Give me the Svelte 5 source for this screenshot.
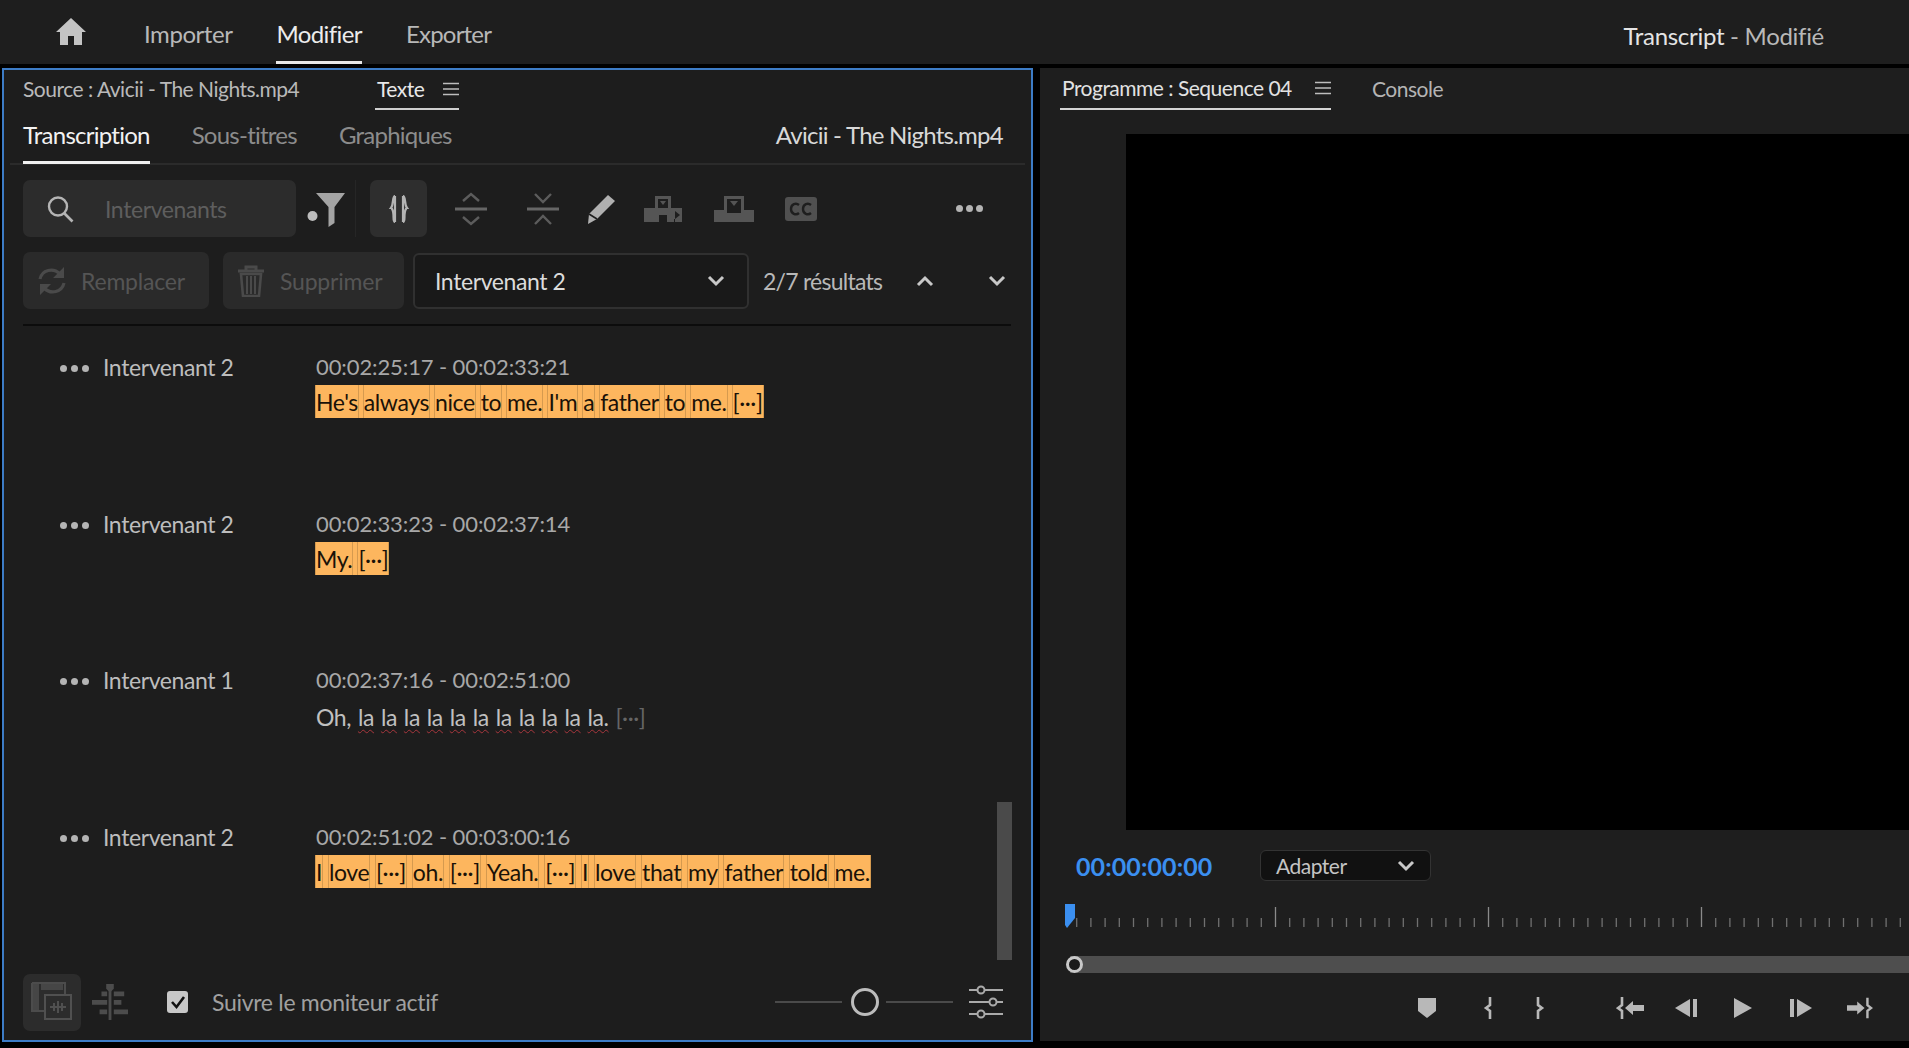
<script>
  const ticks = Array.from({ length: 62 }, (_, i) => ({ x: -1.5 + i * 14.2, major: i % 15 === 0 }));
  const gapW = '[···]';
  const rows = [
    { name: 'Intervenant 2', time: '00:02:25:17 - 00:02:33:21', hl: true, sp: 6, words: ["He's", 'always', 'nice', 'to', 'me.', "I'm", 'a', 'father', 'to', 'me.', gapW] },
    { name: 'Intervenant 2', time: '00:02:33:23 - 00:02:37:14', hl: true, sp: 6, words: ['My.', gapW] },
    { name: 'Intervenant 1', time: '00:02:37:16 - 00:02:51:00', hl: false, sp: 6.9, words: ['Oh,', 'la', 'la', 'la', 'la', 'la', 'la', 'la', 'la', 'la', 'la', 'la.', gapW] },
    { name: 'Intervenant 2', time: '00:02:51:02 - 00:03:00:16', hl: true, sp: 6.85, words: ['I', 'love', gapW, 'oh.', gapW, 'Yeah.', gapW, 'I', 'love', 'that', 'my', 'father', 'told', 'me.'] }
  ];
</script>

{#snippet burger()}
  <svg class="burger" width="16" height="14" viewBox="0 0 16 14"><path d="M0 1.500h16M0 7h16M0 12.500h16" stroke="#bdbdbd" stroke-width="1.600" /></svg>
{/snippet}
{#snippet chev(up = false, w = 18)}
  <svg width={w} height="12" viewBox="0 0 18 12"><path d={up ? 'M2 10l7-7 7 7' : 'M2 2l7 7 7-7'} fill="none" stroke="#c8c8c8" stroke-width="3" /></svg>
{/snippet}

<div class="app">
  <header class="top">
    <svg class="home" width="32" height="28" viewBox="0 0 32 28"><path d="M16 1L1 15h4v13h8v-9h6v9h8V15h4z" fill="#c4c4c4" /></svg>
    <nav class="nav">
      <span>Importer</span>
      <span class="on">Modifier</span>
      <span class="exp">Exporter</span>
    </nav>
    <div class="doc"><b>Transcript</b> - Modifié</div>
  </header>

  <main class="panels">
    <section class="left">
      <div class="tabs">
        <span class="src">Source : Avicii - The Nights.mp4</span>
        <span class="tab on"><span>Texte</span>{@render burger()}</span>
      </div>
      <div class="sub">
        <span class="sub-on">Transcription</span>
        <span>Sous-titres</span>
        <span>Graphiques</span>
        <span class="file">Avicii - The Nights.mp4</span>
      </div>

      <div class="tools">
        <div class="search">
          <svg width="28" height="30" viewBox="0 0 28 30"><circle cx="12" cy="12.500" r="9" fill="none" stroke="#b4b4b4" stroke-width="2.400" /><path d="M18.500 19.500l8 8" stroke="#b4b4b4" stroke-width="2.600" /></svg>
          <span class="ph">Intervenants</span>
        </div>
        <svg class="filter" width="38" height="36" viewBox="0 0 38 36"><circle cx="5.500" cy="25" r="5" fill="#bcbcbc" /><path d="M9 2h29L27.500 16v16l-6 4V16z" fill="#a4a4a4" /></svg>
        <i class="sep"></i>
        <div class="tbtn">
          <svg width="22" height="30" viewBox="0 0 22 30"><path d="M7 2c-3 0-1 8-4 12 1 0 1 1 1 1 3 4 0 13 3 13M15 2c3 0 1 8 4 12-1 0-1 1-1 1-3 4 0 13-3 13M7 2v26M15 2v26" fill="none" stroke="#b4b4b4" stroke-width="2.200" /></svg>
        </div>
        <svg class="ic i1" width="32" height="34" viewBox="0 0 32 34"><path d="M8 9l8-7 8 7M8 25l8 7 8-7" fill="none" stroke="#5c5c5c" stroke-width="2.400" /><path d="M0 17h32" stroke="#666" stroke-width="3" /></svg>
        <svg class="ic i2" width="32" height="34" viewBox="0 0 32 34"><path d="M8 2l8 8 8-8M8 32l8-8 8 8" fill="none" stroke="#5c5c5c" stroke-width="2.400" /><path d="M0 17h32" stroke="#666" stroke-width="3" /></svg>
        <svg class="ic i3" width="30" height="32" viewBox="0 0 30 32"><path d="M22 2l7 6L11 26l-9 5 1-10z" fill="#b0b0b0" /><path d="M3 21l8 5" stroke="#1e1e1e" stroke-width="1.600" /></svg>
        <svg class="ic i4" width="40" height="28" viewBox="0 0 40 28"><path d="M12 1h16v12h11v14h-7v-3h-1v3H24v-7h-8v7H1V13h11z" fill="#555" /><path d="M15 4h10v9H15z" fill="#1e1e1e" /><path d="M17 6h6l-3 4z" fill="#555" /><path d="M32 16l5 4-5 4z" fill="#1e1e1e" /></svg>
        <svg class="ic i5" width="40" height="26" viewBox="0 0 40 26"><path d="M10 0h20v14h10v12H0V14h10z" fill="#555" /><path d="M13 3h14v12H13z" fill="#1e1e1e" /><path d="M16 5h8l-4 5z" fill="#555" /><path d="M13 15h14v2H13z" fill="#1e1e1e" /></svg>
        <svg class="ic i6" width="32" height="24" viewBox="0 0 32 24"><rect width="32" height="24" rx="3" fill="#505050" /><path d="M14 8C11 5.500 6 7 6 12s5 6.500 8 4M26 8C23 5.500 18 7 18 12s5 6.500 8 4" fill="none" stroke="#1e1e1e" stroke-width="2.400" /></svg>
        <div class="more"><i></i><i></i><i></i></div>
      </div>

      <div class="search-row">
        <div class="btn b1">
          <svg width="30" height="32" viewBox="0 0 30 32"><path d="M3 14C5 5 16 2 23 9M27 18c-2 9-13 12-20 5" fill="none" stroke="#4a4a4a" stroke-width="3.200" /><path d="M27 2v11H16zM3 30V19h11z" fill="#4a4a4a" /></svg>
          <span>Remplacer</span>
        </div>
        <div class="btn b2">
          <svg width="28" height="32" viewBox="0 0 28 32"><path d="M1 6h26M9 5V2h10v3" fill="none" stroke="#4a4a4a" stroke-width="3" /><path d="M4 9h20l-2 22H6z" fill="none" stroke="#4a4a4a" stroke-width="2.600" /><path d="M10 11v18M14 11v18M18 11v18" stroke="#4a4a4a" stroke-width="2" /></svg>
          <span>Supprimer</span>
        </div>
        <div class="select">
          <span>Intervenant 2</span>
          {@render chev()}
        </div>
        <span class="count">2/7 résultats</span>
        <span class="up">{@render chev(true)}</span>
        <span class="down">{@render chev()}</span>
      </div>

      <div class="rule"></div>

      <div class="list">
        {#each rows as r}
          <article class="row">
            <div class="dots"><i></i><i></i><i></i></div>
            <div class="name">{r.name}</div>
            <div class="body">
              <div class="time">{r.time}</div>
              <div class="txt" class:hl={r.hl}>
                {#each r.words as w, i}
                  <span class="w" class:la={!r.hl && i > 0 && i < 12} class:gap={w === gapW && !r.hl}>{w}</span>{#if i < r.words.length - 1}<span class="s" style:width="{r.sp}px"></span>{/if}
                {/each}
              </div>
            </div>
          </article>
        {/each}
        <div class="scroll"></div>
      </div>

      <footer class="foot">
        <div class="fbtn">
          <svg width="42" height="40" viewBox="0 0 42 40"><path d="M1 1h33v11M1 1v28h12" fill="none" stroke="#4c4c4c" stroke-width="2" /><path d="M2 2h6v26H2z" fill="#464646" /><path d="M10 2h22v6H10z" fill="#464646" /><rect x="14" y="13" width="26" height="24" fill="#2c2c2c" stroke="#505050" stroke-width="2" /><path d="M19 25h16M23 21v8M27 19v12M31 21v8" stroke="#505050" stroke-width="2" /></svg>
        </div>
        <svg class="align" width="36" height="38" viewBox="0 0 38 38"><path d="M19 5v33" stroke="#4c4c4c" stroke-width="3" /><path d="M15 0h8v5l-4 4-4-4z" fill="#4c4c4c" /><path d="M10 8h6v5h-6zM23 8h11v5H23zM0 17h16v5H0zM23 17h8v5h-8zM8 27h8v5H8zM23 27h15v5H23z" fill="#4c4c4c" /></svg>
        <div class="check"><svg width="20" height="20" viewBox="0 0 20 20"><path d="M4 10l4.500 5L16 5" fill="none" stroke="#111" stroke-width="2.600" /></svg></div>
        <span class="follow">Suivre le moniteur actif</span>
        <div class="slider"><i></i><b></b><i></i></div>
        <svg class="tune" width="34" height="34" viewBox="0 0 34 34"><path d="M0 5h8M16 5h18M0 17h20M28 17h6M0 29h8M16 29h18" stroke="#aaa" stroke-width="2" /><circle cx="12" cy="5" r="3.500" fill="none" stroke="#aaa" stroke-width="2" /><circle cx="24" cy="17" r="3.500" fill="none" stroke="#aaa" stroke-width="2" /><circle cx="12" cy="29" r="3.500" fill="none" stroke="#aaa" stroke-width="2" /></svg>
      </footer>
    </section>

    <section class="right">
      <div class="rtabs">
        <span class="prog"><span>Programme : Sequence 04</span>{@render burger()}</span>
        <span class="console">Console</span>
      </div>
      <div class="video"></div>
      <div class="ctl">
        <span class="tc">00:00:00:00</span>
        <div class="fit"><span>Adapter</span>{@render chev(false, 18)}</div>
      </div>
      <div class="ruler">
        <svg width="845" height="24" viewBox="0 0 845 24">
          {#each ticks as t}
            <path d="M{t.x} {t.major ? 3 : 14}V23" stroke={t.major ? '#8a8a8a' : '#707070'} stroke-width="1.300" />
          {/each}
        </svg>
        <svg class="head" width="12" height="24" viewBox="0 0 12 24"><path d="M1 0h10v14l-8 10-2-3z" fill="#3b8ff0" /></svg>
      </div>
      <div class="bar"><i></i></div>
      <div class="trans">
        <svg class="m1" width="18" height="20" viewBox="0 0 18 20"><path d="M0 0h18v13l-9 7-9-7z" fill="#b8b8b8" /></svg>
        <svg class="m2" width="10" height="24" viewBox="0 0 10 24"><path d="M7 1v8l-4 3 4 3v8" fill="none" stroke="#b8b8b8" stroke-width="2.600" /></svg>
        <svg class="m3" width="10" height="24" viewBox="0 0 10 24"><path d="M3 1v8l4 3-4 3v8" fill="none" stroke="#b8b8b8" stroke-width="2.600" /></svg>
        <svg class="m4" width="28" height="24" viewBox="0 0 28 24"><path d="M6 1v8l-4 3 4 3v8" fill="none" stroke="#b8b8b8" stroke-width="2.600" /><path d="M9 12l8-7v4h11v6H17v4z" fill="#b8b8b8" /></svg>
        <svg class="m5" width="22" height="20" viewBox="0 0 22 20"><path d="M15 1v18L0 10z" fill="#b8b8b8" /><path d="M18 1h4v18h-4z" fill="#b8b8b8" /></svg>
        <svg class="m6" width="18" height="22" viewBox="0 0 18 22"><path d="M0 1l18 10L0 21z" fill="#b8b8b8" /></svg>
        <svg class="m7" width="22" height="20" viewBox="0 0 22 20"><path d="M0 1h4v18H0z" fill="#b8b8b8" /><path d="M7 1v18l15-9z" fill="#b8b8b8" /></svg>
        <svg class="m8" width="26" height="24" viewBox="0 0 28 24"><path d="M22 1v8l4 3-4 3v8" fill="none" stroke="#b8b8b8" stroke-width="2.600" /><path d="M19 12l-8-7v4H0v6h11v4z" fill="#b8b8b8" /></svg>
      </div>
    </section>
  </main>
</div>

<style>
  :global(body) { margin: 0; background: #000; overflow: hidden; }
  .app { width: 1909px; height: 1048px; background: #000; color: #c8c8c8; font-family: Lato, "Noto Sans", sans-serif; font-size: 23px; letter-spacing: -0.4px; overflow: hidden; }
  i { display: block; font-style: normal; }
  svg { display: block; flex: none; }

  .top { height: 64px; background: #1e1e1e; display: flex; align-items: center; margin-bottom: 4px; padding-left: 55px; box-sizing: border-box; }
  .home { margin-bottom: 2px; }
  .nav { display: flex; margin-left: 57px; gap: 44px; height: 64px; align-items: center; font-size: 24px; letter-spacing: -0.45px; color: #b8b8b8; }
  .nav span { height: 64px; line-height: 68px; box-sizing: border-box; }
  .nav .on { color: #ececec; border-bottom: 3px solid #e8e8e8; letter-spacing: -0.6px; }
  .nav .exp { letter-spacing: -0.8px; }
  .doc { margin-left: auto; margin-right: 85px; padding-top: 4px; font-size: 24px; letter-spacing: -0.3px; line-height: 64px; height: 64px; box-sizing: border-box; color: #b8b8b8; }
  .doc b { font-weight: 400; color: #e4e4e4; }

  .panels { display: flex; height: 974px; padding-left: 2px; gap: 7px; }
  .left { width: 1031px; box-sizing: border-box; border: 2px solid #3d7cc6; background: #1d1d1d; display: flex; flex-direction: column; }
  .right { flex: 1; height: 973px; background: #1e1e1e; min-width: 0; }

  .tabs { height: 40px; display: flex; align-items: center; padding-left: 19px; font-size: 21px; letter-spacing: -0.5px; color: #b9b9b9; }
  .src { width: 352px; padding-bottom: 3px; }
  .tab { display: flex; align-items: center; height: 40px; box-sizing: border-box; border-bottom: 2px solid #cfcfcf; padding-bottom: 1px; width: 84px; justify-content: space-between; padding-left: 2px; color: #e8e8e8; }
  .sub { height: 55px; box-sizing: border-box; margin: 0 6px; padding-left: 13px; display: flex; gap: 42px; align-items: center; border-bottom: 2px solid #2b2b2b; color: #8c8c8c; font-size: 24px; letter-spacing: -0.75px; }
  .sub span { line-height: 52px; height: 55px; }
  .sub .sub-on { color: #f2f2f2; box-sizing: border-box; border-bottom: 3px solid #f0f0f0; }
  .sub .file { margin-left: auto; color: #d8d8d8; margin-right: 22px; }

  .tools { display: flex; align-items: center; height: 57px; margin-top: 15px; padding-left: 19px; position: relative; }
  .search { width: 273px; height: 57px; background: #2c2c2c; border-radius: 7px; display: flex; align-items: center; padding-left: 23px; box-sizing: border-box; gap: 31px; }
  .ph { color: #5e5e5e; font-size: 23px; letter-spacing: -0.4px; width: 123px; overflow: hidden; white-space: nowrap; }
  .filter { margin-left: 11px; }
  .sep { width: 1px; height: 57px; background: #262626; margin-left: 10px; }
  .tbtn { width: 57px; height: 57px; background: #2e2e2e; border-radius: 7px; margin-left: 14px; display: flex; align-items: center; justify-content: center; }
  .i1 { margin-left: 28px; }
  .i2 { margin-left: 40px; }
  .i3 { margin-left: 27px; }
  .i4 { margin-left: 27px; }
  .i5 { margin-left: 31px; }
  .i6 { margin-left: 31px; }
  .more { display: flex; gap: 3px; margin-left: 139px; }
  .more i, .dots i { width: 7px; height: 7px; border-radius: 50%; background: #b4b4b4; }

  .search-row { display: flex; align-items: center; height: 57px; margin-top: 15px; padding-left: 19px; }
  .btn { height: 57px; background: #2a2a2a; border-radius: 7px; display: flex; align-items: center; box-sizing: border-box; color: #555; letter-spacing: -0.2px; }
  .b1 { width: 186px; padding-left: 14px; gap: 14px; }
  .b2 { width: 181px; margin-left: 14px; padding-left: 14px; gap: 15px; }
  .select { width: 336px; height: 56px; margin-left: 9px; box-sizing: border-box; border: 2px solid #303030; border-radius: 6px; background: #191919; display: flex; align-items: center; justify-content: space-between; padding: 0 22px 0 20px; color: #dcdcdc; }
  .count { margin-left: 14px; width: 124px; color: #b8b8b8; letter-spacing: -0.75px; }
  .up { margin-left: 29px; }
  .down { margin-left: 54px; }

  .rule { height: 2px; margin: 15px 20px 0 19px; background: #0c0c0c; }
  .list { flex: 1; position: relative; padding-top: 28px; min-height: 0; }
  .row { height: 156.500px; display: flex; align-items: flex-start; }
  .dots { display: flex; gap: 4px; width: 30px; margin: 11px 0 0 56px; }
  .name { width: 212px; margin-left: 13px; line-height: 27px; color: #bdbdbd; }
  .time { font-size: 22px; letter-spacing: -0.1px; color: #a8a8a8; line-height: 26px; height: 26px; padding-left: 1px; margin-bottom: 5px; }
  .txt { display: inline-flex; height: 33px; line-height: 34px; white-space: pre; color: #c0c0c0; padding: 0 1px; }
  .txt:not(.hl) { line-height: 38px; }
  .s { flex: none; }
  .txt.hl { background: #fdb65e; color: #1a1208; }
  .hl .w { box-shadow: 1px 0 0 #d59a4f, -1px 0 0 #d59a4f; }
  .la { text-decoration: underline wavy #a8363d 1px; text-underline-offset: 3px; }
  .gap { color: #666; }
  .scroll { position: absolute; right: 19px; bottom: 14px; width: 15px; height: 158px; background: #4a4a4a; }

  .foot { height: 66px; display: flex; align-items: center; padding: 0 0 10px 19px; box-sizing: border-box; }
  .fbtn { width: 58px; height: 57px; background: #2c2c2c; border-radius: 7px; display: flex; align-items: center; justify-content: center; }
  .align { margin-left: 11px; }
  .check { width: 21px; height: 22px; background: #c8c8c8; border-radius: 3px; margin-left: 39px; display: flex; align-items: center; justify-content: center; }
  .follow { margin-left: 24px; color: #a0a0a0; width: 341px; letter-spacing: -0.3px; }
  .slider { display: flex; align-items: center; margin-left: 222px; }
  .slider i { width: 67px; height: 2px; background: #4a4a4a; }
  .slider b { width: 28px; height: 28px; box-sizing: border-box; border: 3px solid #bcbcbc; border-radius: 50%; margin: 0 7px 0 9px; }
  .tune { margin-left: 16px; }

  .rtabs { height: 42px; display: flex; align-items: center; padding-left: 20px; font-size: 21px; letter-spacing: -0.5px; color: #b4b4b4; }
  .prog { display: flex; align-items: center; justify-content: space-between; width: 271px; height: 42px; box-sizing: border-box; border-bottom: 2px solid #d4d4d4; padding: 0 0 1px 2px; color: #e2e2e2; }
  .console { margin-left: 41px; padding-bottom: 1px; }
  .video { margin: 24px 0 0 86px; height: 696px; background: #000; }
  .ctl { display: flex; align-items: center; height: 31px; margin-top: 20px; padding-left: 36px; }
  .tc { color: #3b8ff0; font-size: 25px; letter-spacing: 0.1px; width: 184px; font-weight: 700; }
  .fit { width: 171px; height: 31px; box-sizing: border-box; background: #111; border: 1px solid #333; border-radius: 6px; display: flex; align-items: center; justify-content: space-between; padding: 0 15px 0 15px; font-size: 21px; letter-spacing: -0.5px; color: #c4c4c4; }
  .ruler { position: relative; height: 24px; margin-top: 23px; margin-left: 24px; overflow: visible; }
  .head { position: absolute; left: 0; top: 0; }
  .bar { height: 17px; margin: 28px 0 0 30px; background: #4e4e4e; position: relative; }
  .bar i { position: absolute; left: -4px; top: 0; width: 17px; height: 17px; box-sizing: border-box; border: 3px solid #c8c8c8; border-radius: 50%; background: #1a1a1a; }
  .trans { display: flex; align-items: center; height: 24px; margin-top: 23px; padding-left: 378px; }
  .m2 { margin-left: 47px; }
  .m3 { margin-left: 42px; }
  .m4 { margin-left: 71px; }
  .m5 { margin-left: 31px; }
  .m6 { margin-left: 37px; }
  .m7 { margin-left: 38px; }
  .m8 { margin-left: 35px; }
</style>
